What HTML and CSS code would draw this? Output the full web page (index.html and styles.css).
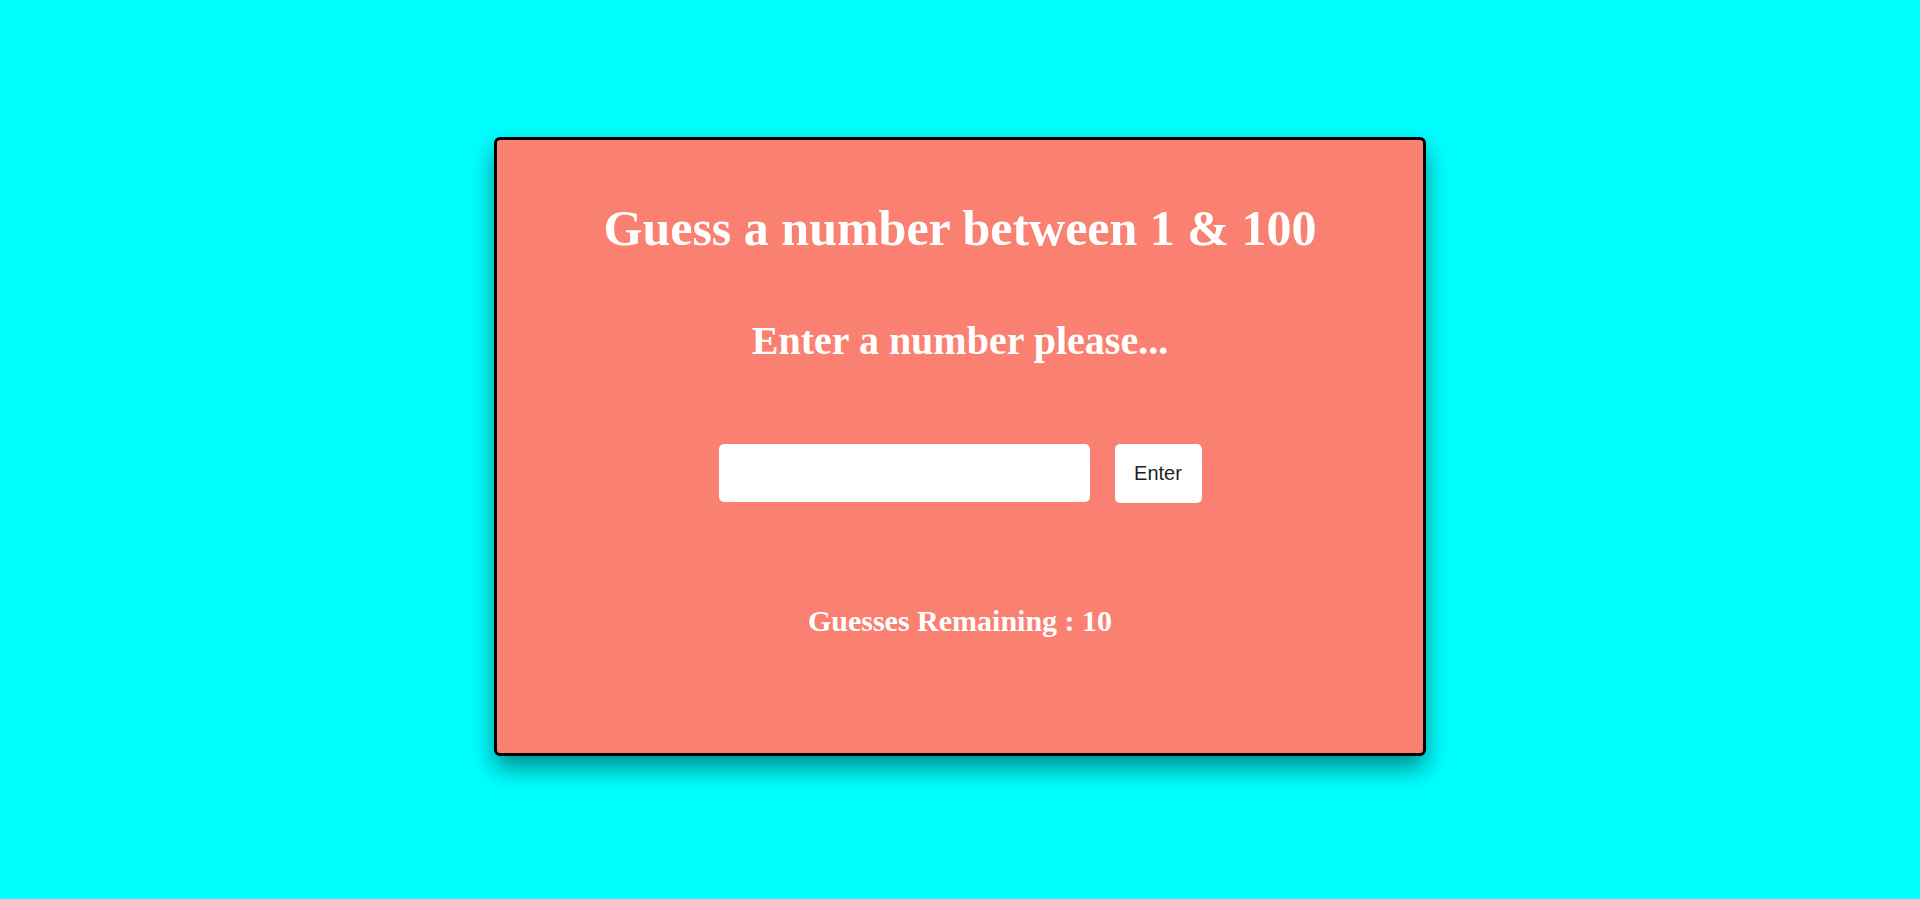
FILE: index.html
```html
<!DOCTYPE html>
<html lang="en">
<head>
<meta charset="utf-8">
<title>Guess a number</title>
<link rel="stylesheet" href="styles.css">
</head>
<body>
  <main class="card">
    <h1 class="title">Guess a number between 1 &amp; 100</h1>
    <h2 class="prompt">Enter a number please...</h2>
    <div class="row">
      <input class="guess-input" type="text" aria-label="Your guess">
      <button class="enter-btn" type="button">Enter</button>
    </div>
    <p class="remaining">Guesses Remaining : 10</p>
  </main>
</body>
</html>
```
FILE: styles.css
```css
html, body {
  margin: 0;
  padding: 0;
}
body {
  background: #00ffff;
  min-height: 899px;
  padding-top: 137px;
  box-sizing: border-box;
  font-family: "Liberation Serif", "Times New Roman", serif;
}
.card {
  box-sizing: border-box;
  width: 932px;
  height: 619px;
  margin: 0 auto;
  background: #fa8072;
  border: 3px solid #000;
  border-radius: 6px;
  box-shadow: 0 12px 24px rgba(0, 0, 0, 0.45);
  display: flex;
  flex-direction: column;
  align-items: center;
  color: #fff;
  text-align: center;
  padding-top: 59px;
}
.title {
  margin: 0;
  font-size: 50px;
  font-weight: bold;
}
.prompt {
  margin: 60px 0 0;
  font-size: 40px;
  font-weight: bold;
}
.row {
  margin-top: 80px;
  display: flex;
  align-items: flex-start;
  gap: 25px;
}
.guess-input {
  box-sizing: border-box;
  width: 371px;
  height: 58px;
  border: none;
  border-radius: 5px;
  background: #fff;
  padding: 0 12px;
  font-size: 20px;
  outline: none;
}
.enter-btn {
  box-sizing: border-box;
  width: 87px;
  height: 59px;
  border: none;
  border-radius: 5px;
  background: #fff;
  color: #222;
  font-family: "Liberation Sans", Arial, sans-serif;
  font-size: 20px;
  padding: 0;
  cursor: pointer;
}
.remaining {
  margin: 101px 0 0;
  font-size: 30px;
  font-weight: bold;
}
```
